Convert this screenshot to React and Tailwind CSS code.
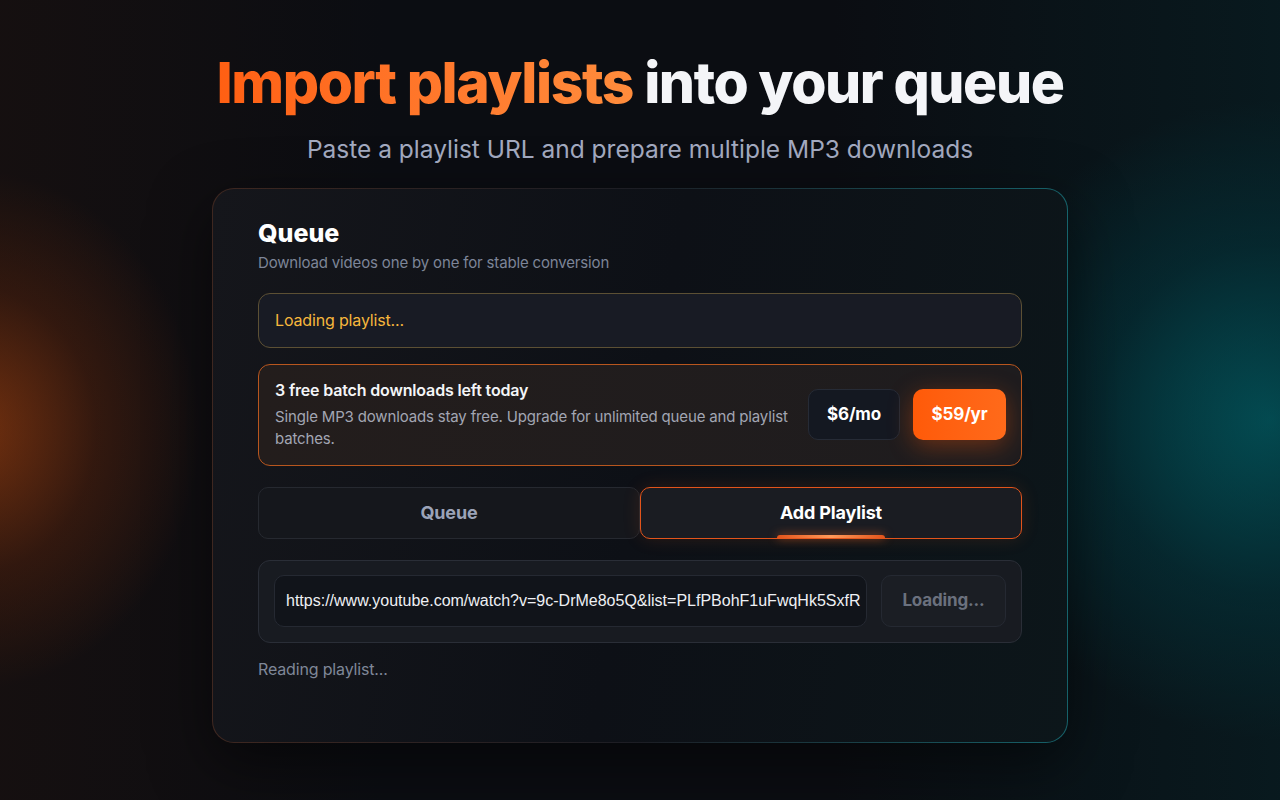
export default function App() {
  return (
    <div
      className="relative min-h-[800px] w-full overflow-hidden bg-[#0b0d12] text-white"
      style={{ fontFamily: 'Inter, "Noto Sans", sans-serif' }}
    >
      {/* Background glows */}
      <div className="pointer-events-none absolute -left-[260px] top-[170px] h-[520px] w-[460px] rounded-full bg-[radial-gradient(closest-side,rgba(196,78,16,0.8),rgba(120,45,12,0.4)_55%,rgba(11,13,18,0)_100%)]" />
      <div className="pointer-events-none absolute -right-[300px] top-[100px] h-[640px] w-[620px] rounded-full bg-[radial-gradient(closest-side,rgba(0,110,118,0.9),rgba(0,70,80,0.45)_55%,rgba(11,13,18,0)_100%)]" />
      <div className="pointer-events-none absolute inset-0 bg-[linear-gradient(90deg,rgba(40,20,12,0.35),rgba(11,13,18,0)_30%,rgba(11,13,18,0)_65%,rgba(5,40,45,0.45))]" />

      <div className="relative flex flex-col items-center pt-[52px]">
        <h1 className="text-[57px] font-extrabold leading-[1.1] tracking-[-0.025em]">
          <span className="bg-gradient-to-r from-[#ff5f12] to-[#ff8c3c] bg-clip-text text-transparent">
            Import playlists
          </span>{' '}
          <span className="text-[#f4f5f8]">into your queue</span>
        </h1>
        <p className="mt-[18px] text-[24.5px] leading-[32px] text-[#a3aac0]">
          Paste a playlist URL and prepare multiple MP3 downloads
        </p>

        {/* Card */}
        <div className="mt-[23px] w-[856px] rounded-[22px] bg-[linear-gradient(90deg,rgba(120,70,50,0.45),rgba(60,60,70,0.35)_50%,rgba(30,150,160,0.6))] p-px shadow-[0_20px_60px_rgba(0,0,0,0.5)]">
          <div className="h-[553px] rounded-[21px] bg-[linear-gradient(100deg,#15161b,#0d1016_50%,#0c161a)] px-[45px] pt-[28px] tracking-[-0.01em]">
            <h2 className="text-[25px] font-extrabold leading-[32px] tracking-normal text-white">Queue</h2>
            <p className="mt-[3px] text-[15px] leading-[22px] text-[#7d8598]">
              Download videos one by one for stable conversion
            </p>

            {/* Loading status */}
            <div className="mt-[19px] flex h-[55px] items-center rounded-[12px] border border-[#5c5034] bg-[#181b24] px-[16px]">
              <span className="text-[16px] text-[#f6b73c]">Loading playlist...</span>
            </div>

            {/* Upgrade box */}
            <div className="mt-[16px] flex h-[102px] items-center justify-between rounded-[12px] border border-[#b8561e] bg-[linear-gradient(90deg,#231d1c,#1e1c1e)] pl-[16px] pr-[15px]">
              <div>
                <div className="text-[16px] font-semibold leading-[22px] text-[#f4f5f7]">
                  3 free batch downloads left today
                </div>
                <div className="mt-[5px] w-[528px] text-[15px] leading-[22px] text-[#a2a6b3]">
                  Single MP3 downloads stay free. Upgrade for unlimited queue and playlist batches.
                </div>
              </div>
              <div className="flex gap-[13px]">
                <button className="h-[51px] w-[92px] rounded-[10px] border border-[#262b36] bg-[#141821] text-[17px] font-bold text-white">
                  $6/mo
                </button>
                <button className="h-[51px] w-[93px] rounded-[10px] bg-gradient-to-r from-[#ff5a08] to-[#ff6a1a] text-[17px] font-bold text-white shadow-[0_6px_24px_rgba(255,90,10,0.35)]">
                  $59/yr
                </button>
              </div>
            </div>

            {/* Tabs */}
            <div className="mt-[21px] grid h-[52px] grid-cols-2">
              <button className="rounded-[10px] border border-[#262930] bg-[#15171c] text-[18px] font-bold text-[#9ba3b8]">
                Queue
              </button>
              <button className="relative rounded-[10px] border border-[#e2541b] bg-[#1a1c22] text-[18px] font-bold text-white shadow-[0_0_18px_rgba(226,84,27,0.15)]">
                Add Playlist
                <span className="absolute bottom-0 left-1/2 h-[3px] w-[108px] -translate-x-1/2 rounded-t-full bg-[linear-gradient(90deg,#e2541b,#ff9a5a_50%,#e2541b)] shadow-[0_0_10px_rgba(255,110,40,0.8)]" />
              </button>
            </div>

            {/* URL input */}
            <div className="mt-[21px] flex h-[83px] items-center gap-[14px] rounded-[12px] border border-[#2a2e37] bg-[#181b21] px-[15px]">
              <div className="flex h-[52px] min-w-0 flex-1 items-center overflow-hidden rounded-[10px] border border-[#252932] bg-[#11141a] px-[11px]">
                <span
                  className="whitespace-nowrap text-[16px] tracking-normal text-[#eef0f4]"
                  style={{ fontFamily: '"Liberation Sans", Arial, sans-serif' }}
                >
                  https://www.youtube.com/watch?v=9c-DrMe8o5Q&amp;list=PLfPBohF1uFwqHk5SxfR
                </span>
              </div>
              <button className="h-[52px] w-[125px] shrink-0 rounded-[10px] border border-[#252932] bg-[#1b1e24] text-[17px] font-bold text-[#6b717e]">
                Loading...
              </button>
            </div>

            <p className="mt-[14px] text-[16px] leading-[24px] text-[#7f8798]">Reading playlist...</p>
          </div>
        </div>
      </div>
    </div>
  );
}
